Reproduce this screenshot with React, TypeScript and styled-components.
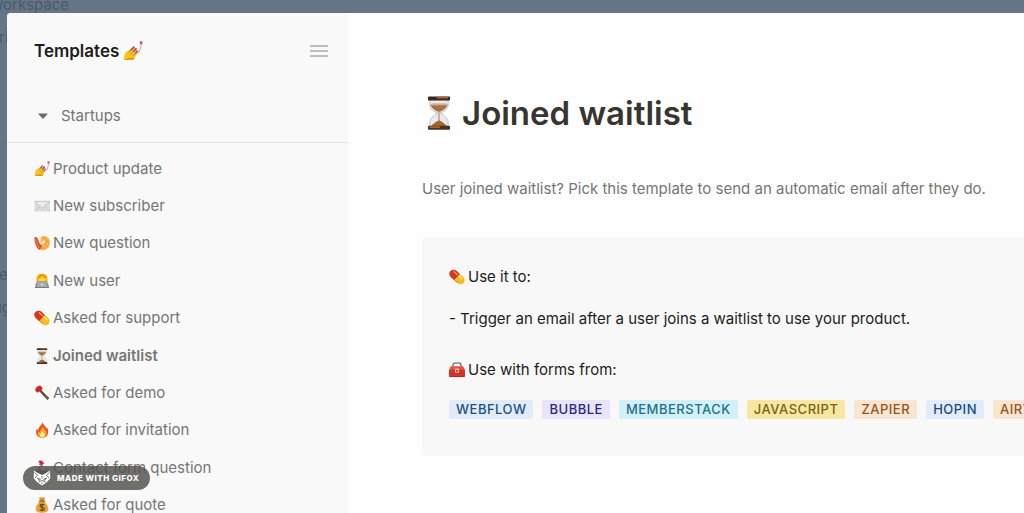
import React from "react";
import styled, { createGlobalStyle } from "styled-components";

const GlobalStyle = createGlobalStyle`
  * { box-sizing: border-box; }
  html, body { margin: 0; }
  body {
    background: #647686;
    font-family: Inter, "Liberation Sans", sans-serif;
    overflow: hidden;
  }
`;

/* ---------- Pictograms ---------- */

const NailPolish = () => (
  <>
    <path d="M.6 15 1.200 11c.4-1.800 1.500-2.700 3-3.500l4.600-2.600c1-.3 1.500.5.8 1.100l1.200.1c.6.5.3 1.200-.1 1.600l.5 1.200-.6 1.100.3 1-1.600 2.600c-.7 1-1.500 1.300-2.600 1.300z" fill="#f6c526" />
    <path d="M.6 15.100c2.600-.1 4.600-.1 6.600-.2 1 0 1.700-.4 2.200-1.200l-3.800-.5z" fill="#dc951a" />
    <path d="m4.500 9.300 2.600-2.900M6 10.900l3.200-3.600M7.600 12.300l3-3.300" stroke="#bb701d" strokeWidth=".6" fill="none" />
    <path d="m6.600 6.900 2-2M8.700 8.100l1.800-2.100M10.300 9.500l1.100-1.500" stroke="#a44474" strokeWidth="1.200" strokeLinecap="round" />
    <path d="M10.600 10.300c1.500-.4 2.600-1.700 3-3.400l1.300-5" stroke="#c2aecb" strokeWidth="1" fill="none" />
    <path d="M13.500.2h2.200l-.4 2.600-1.900-.4z" fill="#b06583" />
  </>
);

const Envelope = () => (
  <>
    <rect x=".5" y="3" width="15.500" height="10.500" rx=".8" fill="#dadbdc" />
    <path d="m.8 13.300 5.700-5.800M15.700 13.300 10 7.500" stroke="#bfc1c3" strokeWidth=".7" />
    <path d="m.7 3.300 6.300 5.900c.8.700 1.700.700 2.500 0l6.300-5.900z" fill="#ebebeb" stroke="#b6b8ba" strokeWidth=".7" />
  </>
);

const Shrimp = () => (
  <>
    <path d="M7.200 1.500C11.500-.2 15.800 2.300 15.900 7.300 16 12 12.500 15.300 8.500 15.200c-2.900-.1-4-1.900-3.500-3.300l3.600-2.300c-2-.9-2.900-3.700-1.400-8.100z" fill="#f4b44c" />
    <path d="M9 2c2.200.5 3 2.500 2.300 4.400M15.500 6.500c-2-.9-3.200-.3-4 1.200M14 12.200c-.6-1.900-1.700-2.600-3.400-2.300M9.200 14.900c.4-1.500 0-2.500-.8-3.500" stroke="#e8983a" strokeWidth=".7" fill="none" />
    <path d="M.4 2.400C2 1.500 3.500 2.300 4 4c.8 3 1.700 5.400 4 6.200-.5 2.500-1.600 4.400-3 4.600C2.500 13 .3 7 .4 2.400z" fill="#df5132" />
    <path d="m8.200 6.200 3-1-1 2.700-2.400.8z" fill="#fff3d8" />
    <path d="m1.500 4 3.700 9" stroke="#f5886a" strokeWidth=".8" />
  </>
);

const Technologist = () => (
  <>
    <path d="M2.500 11V6c0-3.700 2.200-5.300 5.500-5.300s5.500 1.600 5.500 5.300v5z" fill="#f3ae1c" />
    <circle cx="8" cy="6.300" r="3.700" fill="#ffd43b" />
    <path d="M4 5.500c2-.2 3.400-1.200 4-2.500.8 1.600 2 2.300 4 2.500C11.500 2.500 10 1.300 8 1.300S4.500 2.500 4 5.500z" fill="#e9990e" />
    <path d="M1.200 14.500c0-3.500 1-5 3-5.200h7.600c2 .2 3 1.700 3 5.200z" fill="#7d91a3" />
    <path d="M3.300 8.500h9.400l.8 6h-11z" fill="#a9abad" stroke="#85888a" strokeWidth=".5" />
    <path d="M1 14h14v1H1z" fill="#77797b" />
    <circle cx="8" cy="11.500" r=".9" fill="#eee" />
  </>
);

const Pill = () => (
  <g transform="rotate(42 8 8)">
    <rect x="-.8" y="3.800" width="17.600" height="8.400" rx="4.200" fill="#f5bd22" />
    <path d="M8 3.800H3.400a4.200 4.200 0 0 0 0 8.400H8z" fill="#dc3422" />
    <path d="M2.300 6h4.200" stroke="#f59a85" strokeWidth="1.200" strokeLinecap="round" />
    <path d="M9 6h4" stroke="#ffe991" strokeWidth="1.300" strokeLinecap="round" />
    <path d="M3 11.700h9.500" stroke="#b56315" strokeWidth=".6" />
  </g>
);

const Hourglass = () => (
  <>
    <path d="M3.700 1.700h8.600v2.500c0 2-1.800 3.100-3.600 3.800.2.200 3.600 2 3.600 4.500v2H3.700v-2C3.700 10 7.100 8.200 7.300 8 5.500 7.300 3.700 6.200 3.700 4.200z" fill="#e8ebee" stroke="#b6babd" strokeWidth=".4" />
    <path d="M4 4h8c-.5 2-2.300 2.800-3.600 3.400h-.8C6.300 6.800 4.500 6 4 4z" fill="#a97148" />
    <path d="M4.500 3.400h7v.9h-7z" fill="#d5b296" />
    <path d="M7.800 7.500h.4v4c1.400.5 2.600 1.600 3.600 2.700H4.200c1-1.100 2.200-2.200 3.600-2.700z" fill="#a76624" />
    <rect x="2.800" y=".2" width="10.400" height="1.900" rx=".5" fill="#3b2921" />
    <rect x="2.800" y="14" width="10.400" height="1.900" rx=".5" fill="#4a3226" />
    <path d="M7 .8h5.300M3.600 14.600h4.800" stroke="#a9622c" strokeWidth=".8" />
  </>
);

const Axe = () => (
  <>
    <path d="m5.300 3.600 9.300 9.500-1 1.500L4.500 5z" fill="#56402b" stroke="#382a20" strokeWidth=".6" />
    <path d="m11.500 9.600 3.400 3.200-1.300 1.900-3-2.800z" fill="#735c37" />
    <path d="M1.200 5.200C1.400 2.800 3.400.9 6.400.5l2.200 2.500-.6 1.800-2.300 1-1.300 1.800c-1.300-.2-2.500-.9-3.200-2.400z" fill="#d32521" />
    <path d="M1.200 5.200c.7 1.500 1.900 2.200 3.200 2.400l-.9.900C2.100 7.700 1.200 6.700 1.200 5.200z" fill="#c9c9ca" />
  </>
);

const Fire = () => (
  <>
    <path d="M8.400.2c.7 2.600 3.300 4 4 6.600.4-.6.500-1.200.4-2C15.800 10 14 15.800 8.200 15.800 2.800 15.800.7 11 3 6.600c.3 1 .7 1.500 1.200 1.800C4 5 7.800 3.600 8.400.2z" fill="#e9511e" />
    <path d="M8.700 4c.2 2.300 3.800 4 3.800 7.300 0 2.800-2 4.300-4.300 4.300-2.700 0-4.300-1.700-4.300-4 0-1 .3-1.900.7-2.600.3 1 .8 1.300 1.300 1.500C5.900 7.800 8.600 6.800 8.700 4z" fill="#f8ad28" />
    <path d="M8.400 8.800c.1 1.700 2.200 2.500 2.200 4.300 0 1.600-1 2.400-2.300 2.400S6 14.500 6 13.300c0-1.700 2.200-2.400 2.400-4.500z" fill="#fff096" />
  </>
);

const Flamingo = () => (
  <>
    <path d="M4.800.7c2.700-.8 4.300.2 4.800 2.500l1 .6-2 .6-1.500 1-2-.9z" fill="#c92d49" />
    <path d="m4.200 1.800 1.900 2.400" stroke="#f8a7b0" strokeWidth="1" />
    <path d="M8.500 5C5 7 4.800 9.600 7 10.700c2 .9 4.400.3 5.500-1.700.6 3.700-1.400 6.200-5 6.300-3.700 0-5.800-2-5.400-4.900" fill="#686b70" stroke="#686b70" strokeWidth="1.300" />
  </>
);

const MoneyBag = () => (
  <>
    <path d="M5 .8c1-.7 1.900.2 3-.3 1-.5 2 .3 3.200.1l-1.600 3.500H6.300z" fill="#d6942d" />
    <path d="M6 4h4c2 2 4.300 5 4.300 8 0 2.600-1.600 3.700-6.300 3.700S1.700 14.600 1.700 12C1.700 9 4 6 6 4z" fill="#e4a63c" />
    <path d="M5.400 4.200h5.200" stroke="#8c5a21" strokeWidth="1.300" strokeLinecap="round" />
    <path d="M10.300 8.200C9.600 7 6 6.900 6 8.900c0 2.100 4.500 1 4.500 3.100 0 2-3.900 1.900-4.700.5M8.100 6.300v8" stroke="#614116" strokeWidth="1.100" fill="none" />
  </>
);

const Toolbox = () => (
  <>
    <path d="M4 5V3.200C4 1.700 4.600 1 5.800 1h4.400c1.200 0 1.800.7 1.800 2.200V5" stroke="#50545a" strokeWidth="1.100" fill="none" />
    <path d="M1.800 4.200h12.400L16 8.100H0z" fill="#e7513b" />
    <rect x="0" y="8" width="16" height="6.700" rx=".5" fill="#d93324" />
    <path d="M.2 8.400h15.600M.2 11.500h15.600" stroke="#b23325" strokeWidth=".6" />
    <path d="M6 6.500h4v4.200H6z" fill="#edb6a6" />
    <path d="M7 8h2v2H7z" fill="#b0584c" />
    <path d="M.5 14.600h15" stroke="#7d251f" strokeWidth=".8" />
  </>
);

const glyphs = {
  nail: NailPolish,
  envelope: Envelope,
  shrimp: Shrimp,
  tech: Technologist,
  pill: Pill,
  hourglass: Hourglass,
  axe: Axe,
  fire: Fire,
  flamingo: Flamingo,
  money: MoneyBag,
  toolbox: Toolbox,
};
type GlyphName = keyof typeof glyphs;

const GlyphSvg = styled.svg<{ $size: number }>`
  flex: none;
  display: block;
  width: ${(p) => p.$size}px;
  height: ${(p) => p.$size}px;
`;

function Glyph({ name, size = 16 }: { name: GlyphName; size?: number }) {
  const Shape = glyphs[name];
  return (
    <GlyphSvg $size={size} viewBox="0 0 16 16" aria-hidden="true">
      <Shape />
    </GlyphSvg>
  );
}

/* ---------- Layout ---------- */

const Screen = styled.div`
  position: relative;
  height: 100vh;
  padding: 13px 0 0 7px;
  overflow: hidden;
`;

const Behind = styled.span<{ $x: number; $y: number }>`
  position: absolute;
  left: ${(p) => p.$x}px;
  top: ${(p) => p.$y}px;
  color: #4c5a68;
  font-size: 15px;
  line-height: 20px;
`;

const Modal = styled.div`
  position: relative;
  display: flex;
  height: 100%;
  background: #fefefe;
  border-top-left-radius: 4px;
  overflow: hidden;
`;

const Sidebar = styled.aside`
  flex: none;
  width: 341px;
  background: #f9f9f9;
`;

const SidebarHeader = styled.header`
  display: flex;
  align-items: center;
  justify-content: space-between;
  height: 76px;
  padding: 0 20px 0 27px;
`;

const SidebarTitle = styled.h2`
  display: flex;
  align-items: center;
  gap: 4px;
  margin: 0;
  color: #1d1d1b;
  font-size: 17px;
  line-height: 24px;
  font-weight: 600;
`;

const MenuButton = styled.button`
  display: grid;
  gap: 3px;
  width: 18px;
  padding: 0;
  border: 0;
  background: none;
`;

const MenuBar = styled.span`
  height: 2px;
  background: #bdbdbd;
`;

const GroupButton = styled.button`
  display: flex;
  align-items: center;
  gap: 13px;
  width: 100%;
  height: 54px;
  padding: 0 31px;
  border: 0;
  border-bottom: 1px solid #e2e2e2;
  background: none;
  color: #767674;
  font: 400 15px/24px Inter, "Liberation Sans", sans-serif;
  text-align: left;
`;

const Nav = styled.nav`
  padding-top: 7px;
`;

const List = styled.ul`
  display: grid;
  grid-auto-rows: 1fr;
  min-height: 374px;
  margin: 0;
  padding: 0 27px;
  list-style: none;
`;

const Item = styled.li`
  display: flex;
  align-items: center;
`;

const ItemLink = styled.a<{ $active?: boolean }>`
  display: flex;
  align-items: center;
  gap: 3px;
  color: #767674;
  font-size: 15px;
  line-height: 24px;
  font-weight: ${(p) => (p.$active ? 600 : 400)};
  text-decoration: none;
  white-space: nowrap;
`;

const Main = styled.main`
  flex: 1;
  min-width: 0;
  padding: 80px 0 0 74px;
`;

const Title = styled.h1`
  display: flex;
  align-items: center;
  gap: 6px;
  margin: 0 0 44px;
  color: #37352f;
  font-size: 33px;
  line-height: 40px;
  font-weight: 600;
`;

const Lead = styled.p`
  margin: 0 0 37px;
  color: #767674;
  font-size: 15px;
  line-height: 24px;
  white-space: nowrap;
`;

const Card = styled.section`
  padding: 27px 0 37px 27px;
  border-radius: 4px 0 0 4px;
  background: #f8f8f8;
  color: #1d1d1b;
  font-size: 15px;
  line-height: 24px;
  overflow: hidden;
`;

const CardLine = styled.p<{ $gap: number }>`
  display: flex;
  align-items: center;
  gap: 3px;
  margin: 0 0 ${(p) => p.$gap}px;
  white-space: nowrap;
`;

const Tags = styled.div`
  display: flex;
  gap: 9px;
`;

const Tag = styled.span<{ $bg: string; $fg: string }>`
  flex: none;
  padding: 0 7px;
  border-radius: 2px;
  background: ${(p) => p.$bg};
  color: ${(p) => p.$fg};
  font-size: 13px;
  line-height: 19px;
  font-weight: 500;
  letter-spacing: 0.5px;
`;

const GifoxBadge = styled.a`
  position: absolute;
  left: 23px;
  bottom: 23px;
  display: flex;
  align-items: center;
  gap: 6px;
  height: 24px;
  padding: 0 11px 0 10px;
  border-radius: 12px;
  background: rgba(84, 84, 80, 0.84);
  color: #fff;
  font-size: 8px;
  font-weight: 800;
  letter-spacing: 0.5px;
  text-decoration: none;
  white-space: nowrap;
`;

const items: { icon: GlyphName; label: string }[] = [
  { icon: "nail", label: "Product update" },
  { icon: "envelope", label: "New subscriber" },
  { icon: "shrimp", label: "New question" },
  { icon: "tech", label: "New user" },
  { icon: "pill", label: "Asked for support" },
  { icon: "hourglass", label: "Joined waitlist" },
  { icon: "axe", label: "Asked for demo" },
  { icon: "fire", label: "Asked for invitation" },
  { icon: "flamingo", label: "Contact form question" },
  { icon: "money", label: "Asked for quote" },
];

const tags = [
  { label: "WEBFLOW", bg: "#e1ecf8", fg: "#205083" },
  { label: "BUBBLE", bg: "#e8e5fa", fg: "#2e2585" },
  { label: "MEMBERSTACK", bg: "#d1f0f7", fg: "#25708a" },
  { label: "JAVASCRIPT", bg: "#f8e7a0", fg: "#79621a" },
  { label: "ZAPIER", bg: "#fae5d0", fg: "#955522" },
  { label: "HOPIN", bg: "#e1ecf8", fg: "#174a82" },
  { label: "AIRTABLE", bg: "#fae5d0", fg: "#955522" },
];

export default function App() {
  return (
    <>
      <GlobalStyle />
      <Screen>
        <Behind $x={-11} $y={-5}>Workspace</Behind>
        <Behind $x={-1} $y={28}>ri</Behind>
        <Behind $x={-1} $y={265}>e</Behind>
        <Behind $x={-7} $y={298}>ug</Behind>
        <Modal>
          <Sidebar>
            <SidebarHeader>
              <SidebarTitle>
                Templates <Glyph name="nail" size={20} />
              </SidebarTitle>
              <MenuButton aria-label="Menu">
                <MenuBar />
                <MenuBar />
                <MenuBar />
              </MenuButton>
            </SidebarHeader>
            <GroupButton aria-expanded="true">
              <svg width="10" height="6" viewBox="0 0 10 6" aria-hidden="true">
                <path d="M1 .4h8c.6 0 .8.5.4.9L5.500 5.600c-.3.300-.7.300-1 0L.6 1.300C.2.900.4.400 1 .4z" fill="#6a6a68" />
              </svg>
              Startups
            </GroupButton>
            <Nav aria-label="Templates">
              <List>
                {items.map((it) => (
                  <Item key={it.label}>
                    <ItemLink href="#" $active={it.label === "Joined waitlist"}>
                      <Glyph name={it.icon} />
                      {it.label}
                    </ItemLink>
                  </Item>
                ))}
              </List>
            </Nav>
          </Sidebar>
          <Main>
            <Title>
              <Glyph name="hourglass" size={34} />
              Joined waitlist
            </Title>
            <Lead>User joined waitlist? Pick this template to send an automatic email after they do.</Lead>
            <Card>
              <CardLine $gap={18}>
                <Glyph name="pill" /> Use it to:
              </CardLine>
              <CardLine $gap={27}>- Trigger an email after a user joins a waitlist to use your product.</CardLine>
              <CardLine $gap={18}>
                <Glyph name="toolbox" /> Use with forms from:
              </CardLine>
              <Tags>
                {tags.map((t) => (
                  <Tag key={t.label} $bg={t.bg} $fg={t.fg}>
                    {t.label}
                  </Tag>
                ))}
              </Tags>
            </Card>
          </Main>
        </Modal>
        <GifoxBadge href="#">
          <svg width="18" height="16" viewBox="0 0 18 16" fill="none" aria-hidden="true">
            <path d="M1 .8 5.800 3.500 9 5l3.200-1.500L17 .8l.3 7.500L14 12l-5 3.500L4 12 .7 8.300z" fill="#fff" />
            <path d="m1.500 2.500 3.200 2.700L2 8M16.500 2.500l-3.200 2.700L16 8M4.500 8l2.800 1.200-1 1.300zM13.500 8l-2.800 1.200 1 1.300zM5.500 12l3.500-1.500 3.500 1.500M9 6v2.500" stroke="#666663" strokeWidth=".9" />
            <path d="M7.800 12.800h2.400L9 14z" fill="#666663" />
          </svg>
          MADE WITH GIFOX
        </GifoxBadge>
      </Screen>
    </>
  );
}
